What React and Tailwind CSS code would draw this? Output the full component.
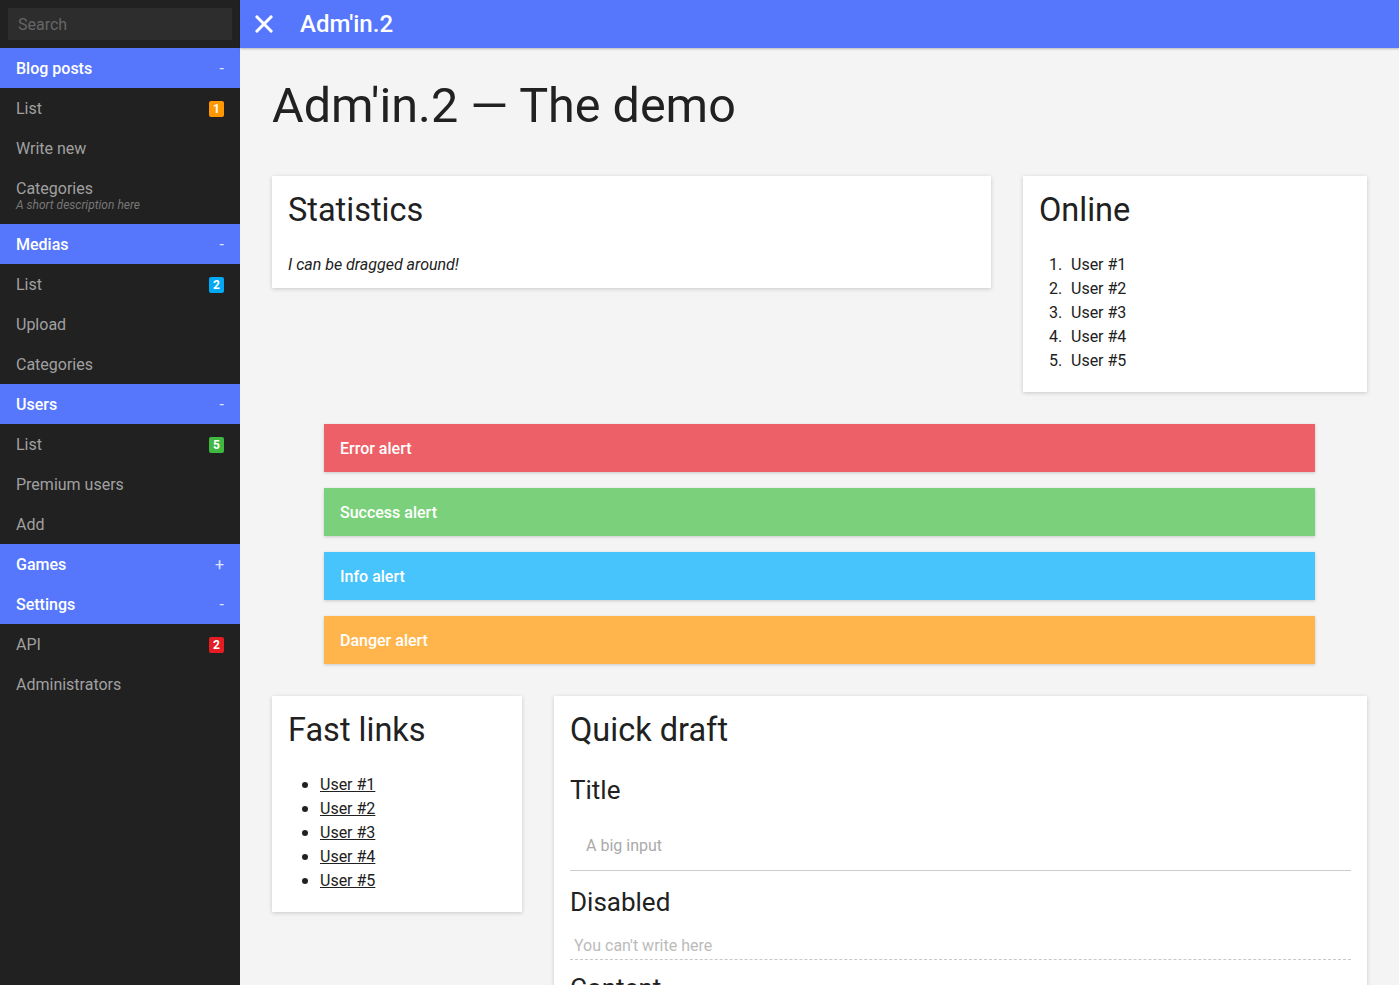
import React from "react";

const nav = [
  {
    title: "Blog posts",
    sign: "-",
    items: [
      { label: "List", badge: "1", color: "bg-[#ff9800]" },
      { label: "Write new" },
      { label: "Categories", desc: "A short description here" },
    ],
  },
  {
    title: "Medias",
    sign: "-",
    items: [
      { label: "List", badge: "2", color: "bg-[#03a9f4]" },
      { label: "Upload" },
      { label: "Categories" },
    ],
  },
  {
    title: "Users",
    sign: "-",
    items: [
      { label: "List", badge: "5", color: "bg-[#3fb93f]" },
      { label: "Premium users" },
      { label: "Add" },
    ],
  },
  { title: "Games", sign: "+", items: [] },
  {
    title: "Settings",
    sign: "-",
    items: [
      { label: "API", badge: "2", color: "bg-[#e51c23]" },
      { label: "Administrators" },
    ],
  },
];

const alerts = [
  { label: "Error alert", bg: "bg-[#ee6068]" },
  { label: "Success alert", bg: "bg-[#7bd17b]" },
  { label: "Info alert", bg: "bg-[#47c4fc]" },
  { label: "Danger alert", bg: "bg-[#ffb54c]" },
];

const users = ["User #1", "User #2", "User #3", "User #4", "User #5"];

function Sidebar() {
  return (
    <aside className="w-[240px] shrink-0 bg-[#212121] h-full">
      <div className="p-2">
        <div className="h-8 bg-[#2d2d2d] px-[10px] pt-[1px] flex items-center text-[16px] text-[#666]">
          Search
        </div>
      </div>
      {nav.map((group) => (
        <div key={group.title}>
          <div className="h-10 bg-[#5677fc] flex items-center justify-between pl-4 pr-[16px] pt-[2px] text-white font-medium text-[16px]">
            <span>{group.title}</span>
            <span className="text-white/80 font-normal">{group.sign}</span>
          </div>
          {group.items.map((item) => (
            <div
              key={item.label}
              className={
                item.desc
                  ? "h-14 flex flex-col justify-center pl-4 pr-4"
                  : "h-10 flex items-center justify-between pl-4 pr-4 pt-[2px]"
              }
            >
              {item.desc ? (
                <>
                  <span className="text-[16px] leading-[18px] text-[#a0a0a0] mt-[-1px]">
                    {item.label}
                  </span>
                  <span className="text-[12px] leading-[14px] italic text-[#777]">
                    {item.desc}
                  </span>
                </>
              ) : (
                <>
                  <span className="text-[16px] text-[#a0a0a0]">{item.label}</span>
                  {item.badge && (
                    <span
                      className={`${item.color} w-[15px] h-[16px] rounded-[2px] flex items-center justify-center text-white text-[12px] font-bold leading-none`}
                    >
                      {item.badge}
                    </span>
                  )}
                </>
              )}
            </div>
          ))}
        </div>
      ))}
    </aside>
  );
}

function Card({ className = "", children }) {
  return (
    <div className={`bg-white shadow-[0_1px_4px_rgba(0,0,0,0.18)] px-4 pt-4 ${className}`}>
      {children}
    </div>
  );
}

export default function App() {
  return (
    <div className="flex h-screen overflow-hidden font-['Roboto','Liberation_Sans',sans-serif] text-[#212121]">
      <Sidebar />
      <div className="flex-1 min-w-0 flex flex-col">
        <header className="h-12 shrink-0 bg-[#5677fc] flex items-center shadow-[0_1px_2px_rgba(0,0,0,0.25)] relative z-10">
          <svg width="18" height="18" viewBox="0 0 18 18" className="ml-[15px]">
            <path d="M2 2 L16 16 M16 2 L2 16" stroke="white" strokeWidth="3" strokeLinecap="square" />
          </svg>
          <span className="ml-[27px] text-white text-[24px] font-medium">Adm'in.2</span>
        </header>
        <main className="flex-1 overflow-hidden bg-[#f4f4f4] px-8 pt-[30px]">
          <h1 className="text-[48.5px] leading-[56px] font-normal mb-[42px]">
            Adm'in.2 — The demo
          </h1>

          <div className="flex gap-8 items-start">
            <Card className="flex-1 pb-[11px]">
              <h2 className="text-[32.5px] leading-[36px]">Statistics</h2>
              <p className="mt-6 pt-[1px] text-[16px] leading-6 italic">I can be dragged around!</p>
            </Card>
            <Card className="w-[344px] shrink-0 pb-[19px]">
              <h2 className="text-[32.5px] leading-[36px]">Online</h2>
              <ol className="mt-6 pt-[1px] pl-[10px]">
                {users.map((u, i) => (
                  <li key={u} className="flex text-[16px] leading-6">
                    <span className="w-[22px]">{i + 1}.</span>
                    {u}
                  </li>
                ))}
              </ol>
            </Card>
          </div>

          <div className="mt-8 mx-[52px] flex flex-col gap-4">
            {alerts.map((a) => (
              <div
                key={a.label}
                className={`${a.bg} h-12 flex items-center px-4 pt-[1px] text-white font-medium text-[16px] shadow-[0_1px_3px_rgba(0,0,0,0.18)]`}
              >
                {a.label}
              </div>
            ))}
          </div>

          <div className="mt-8 flex gap-8 items-start">
            <Card className="w-[250px] shrink-0 pb-[19px]">
              <h2 className="text-[32.5px] leading-[36px]">Fast links</h2>
              <ul className="mt-6 pt-[1px]">
                {users.map((u) => (
                  <li key={u} className="flex items-center text-[16px] leading-6">
                    <span className="ml-[14px] mr-[12px] w-[6px] h-[6px] rounded-full bg-[#222]" />
                    <a href="#" className="underline">
                      {u}
                    </a>
                  </li>
                ))}
              </ul>
            </Card>
            <Card className="flex-1 pb-6">
              <h2 className="text-[32.5px] leading-[36px]">Quick draft</h2>
              <h3 className="mt-[26px] text-[26px] leading-[32px]">Title</h3>
              <input
                placeholder="A big input"
                className="mt-[13px] w-full h-[52px] px-4 pt-[1px] text-[16px] border-b border-[#cccccc] outline-none placeholder:text-[#aaa] bg-transparent"
              />
              <h3 className="mt-[15px] text-[26px] leading-[32px]">Disabled</h3>
              <input
                disabled
                placeholder="You can't write here"
                className="mt-[12px] w-full h-[30px] px-1 pt-[1px] text-[16px] border-b border-dashed border-[#c8c8c8] outline-none placeholder:text-[#bbb] bg-transparent"
              />
              <h3 className="mt-[12px] text-[26px] leading-[32px]">Content</h3>
              <div className="h-32" />
            </Card>
          </div>
        </main>
      </div>
    </div>
  );
}
